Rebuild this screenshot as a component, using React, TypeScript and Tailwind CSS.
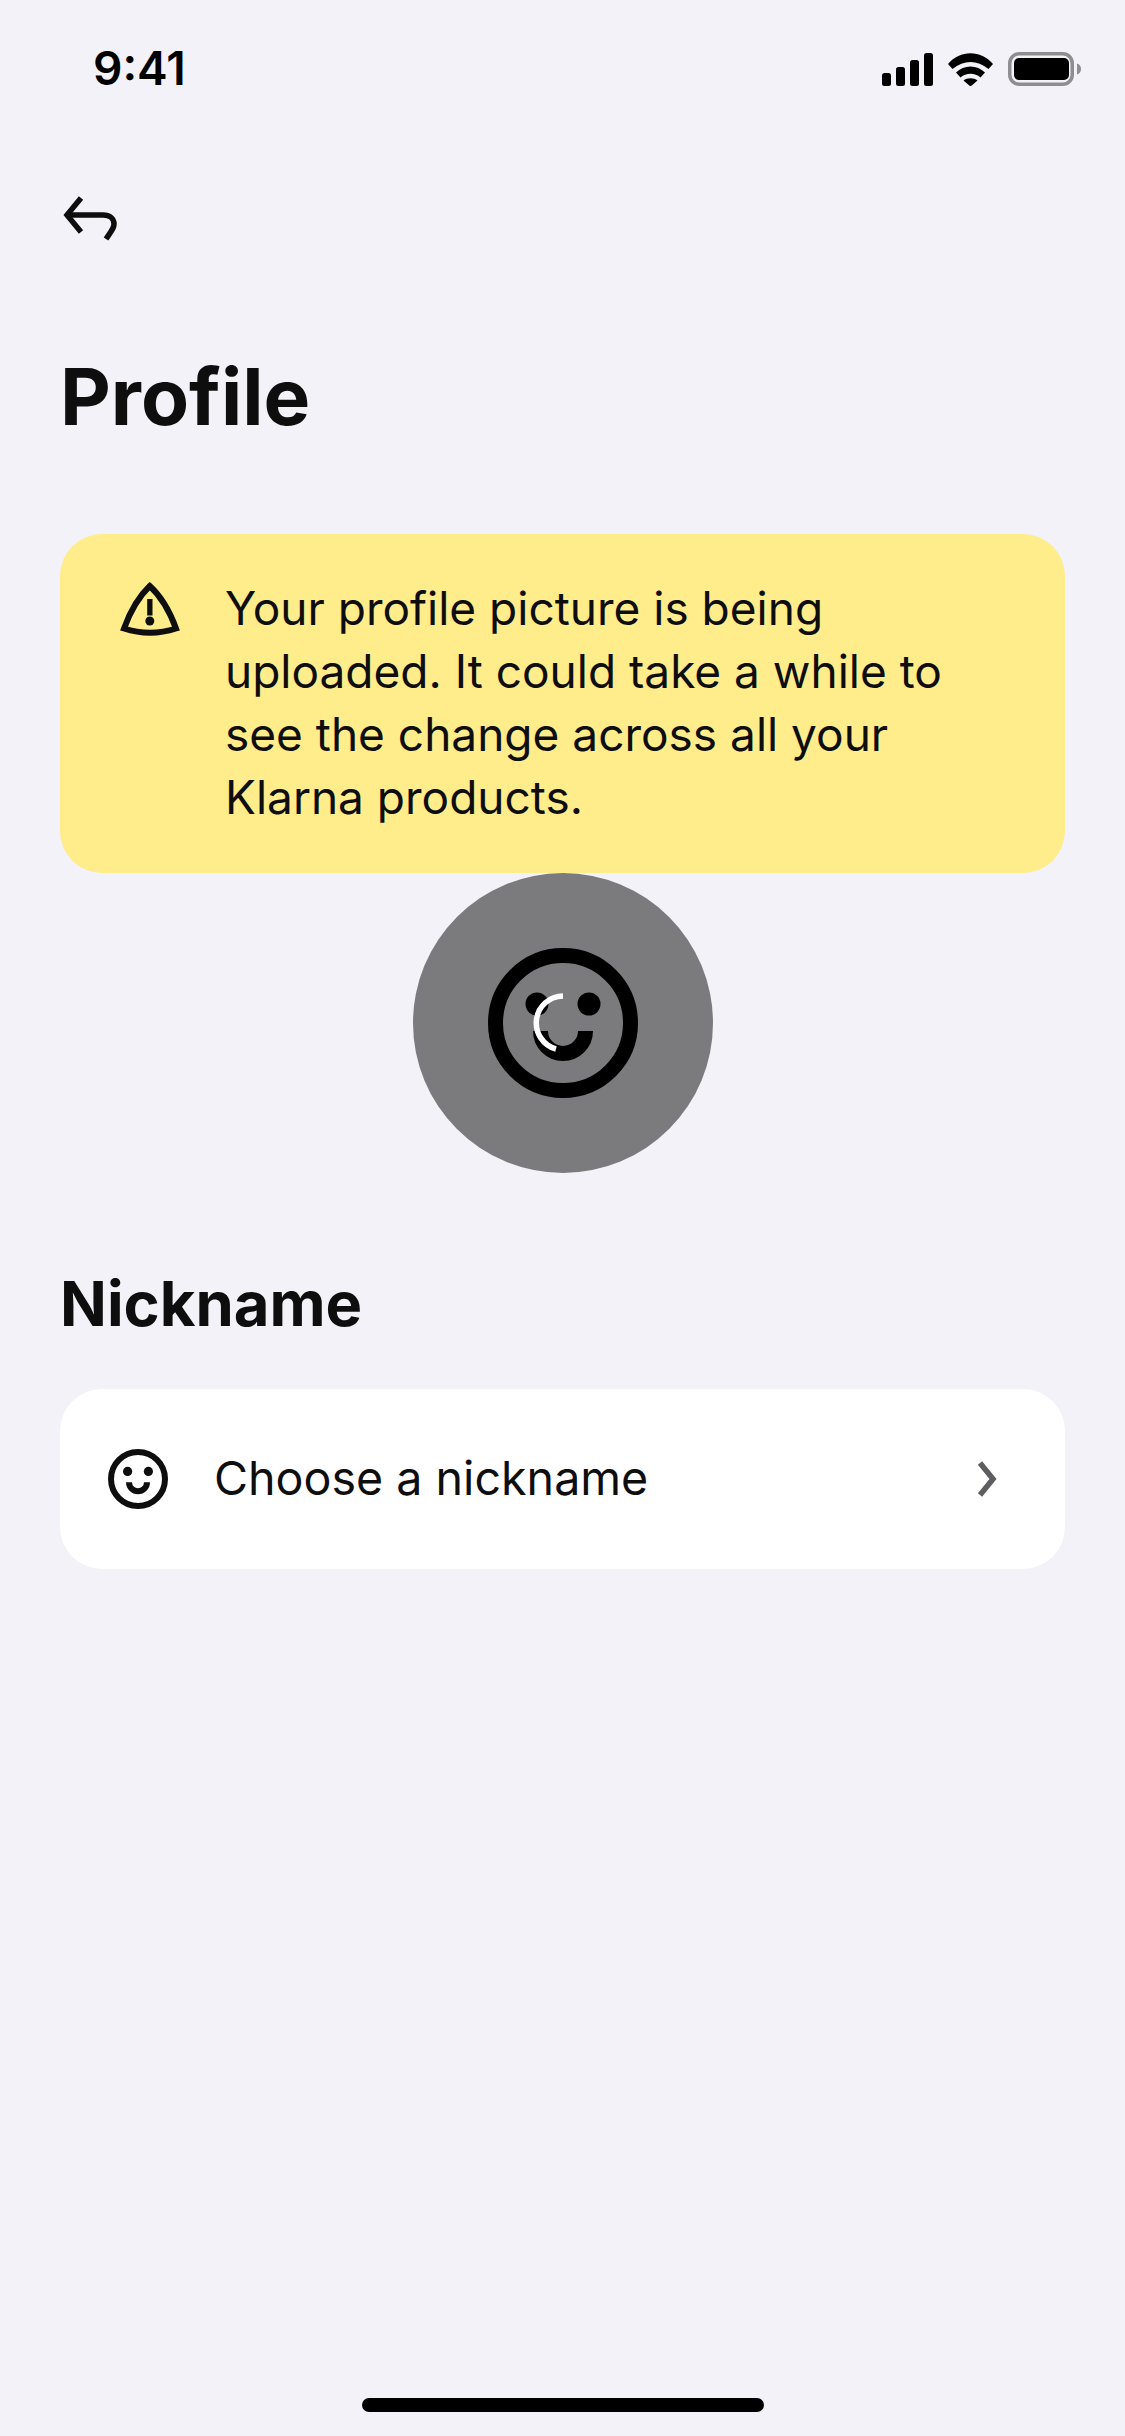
const FONT = "font-['Inter','Liberation_Sans',sans-serif]";

function Face({ spinner, color, className }: { spinner?: boolean; color: string; className: string }) {
  return (
    <svg viewBox="0 0 150 150" className={className} fill="none">
      <circle cx="75" cy="75" r="67.5" stroke={color} strokeWidth="15" />
      <circle cx="49" cy="56" r="11.5" fill={color} />
      <circle cx="101" cy="56" r="11.5" fill={color} />
      <path d="M52.5 83a22.5 22.5 0 0 0 45 0" stroke={color} strokeWidth="15" />
      {spinner && <path d="M75 48A27 27 0 0 0 68 101" stroke="#fff" strokeWidth="5.5" />}
    </svg>
  );
}

function StatusBar() {
  return (
    <div className="flex h-[86px] items-end justify-between pl-[93px] pr-[44px]">
      <span className="text-[46px] font-semibold leading-[36px] text-black">9:41</span>
      <div className="flex items-center gap-[15px]">
        <svg width="51" height="33" viewBox="0 0 51 33" fill="#000">
          <rect x="0" y="20" width="9" height="13" rx="2.5" />
          <rect x="14" y="14" width="9" height="19" rx="2.5" />
          <rect x="28" y="7" width="9" height="26" rx="2.5" />
          <rect x="42" y="0" width="9" height="33" rx="2.5" />
        </svg>
        <svg width="45" height="33" viewBox="0 0 45 33" fill="#000">
          <path d="M0 11C12-3.500 33-3.500 45 11L40.500 16C29 6.500 16 6.500 4.500 16Z" />
          <path d="M8 19.500C16 11.500 29 11.500 37 19.500L32.500 24.500C27 19.500 18 19.500 12.500 24.500Z" />
          <path d="M15.500 27.500C19 24.500 26 24.500 29.500 27.500L22.500 33.500Z" />
        </svg>
        <svg width="73" height="34" viewBox="0 0 73 34">
          <rect x="1.75" y="1.75" width="62.5" height="30.5" rx="9.5" fill="none" stroke="#8e8e90" strokeWidth="3.5" />
          <rect x="6" y="6" width="55" height="22" rx="5" fill="#000" />
          <path d="M69 11.500c2.500.6 4 2.800 4 5.500s-1.500 4.900-4 5.500z" fill="#8e8e90" />
        </svg>
      </div>
    </div>
  );
}

export default function App() {
  return (
    <div className={`${FONT} flex h-[2436px] w-full flex-col bg-[#f2f2f8] text-[#0e0e0f]`}>
      <StatusBar />
      <div className="flex flex-1 flex-col px-[60px]">
        <svg width="60" height="54" viewBox="0 0 60 54" fill="none" className="mt-[106px]" stroke="#0e0e0f" strokeWidth="5.5">
          <path d="M21 6L7 23L21 40" />
          <path d="M7 23H43C50 23 54 27 54 32C54 36 52 38 46 47" />
        </svg>
        <h1 className="mt-[101px] text-[78.5px] font-bold leading-[100px]">Profile</h1>
        <div className="mt-[87px] flex h-[339px] items-start rounded-[42px] bg-[#ffec8b] pl-[60px] pr-[60px] pt-[43px]">
          <svg width="60" height="60" viewBox="0 0 60 60" fill="none" className="mt-[4px] shrink-0 overflow-visible">
            <path d="M29.800 5Q46 20 56 47.500Q30 56 4 47.500Q14 20 29.800 5Z" stroke="#0e0e0f" strokeWidth="6" />
            <rect x="27.200" y="18" width="5.300" height="16.500" fill="#0e0e0f" />
            <circle cx="29.800" cy="40" r="4.500" fill="#0e0e0f" />
          </svg>
          <p className="ml-[45px] text-[46px] font-normal leading-[63px]">
            Your profile picture is being uploaded. It could take a while to see the change across all your Klarna products.
          </p>
        </div>
        <div className="flex h-[300px] w-[300px] items-center justify-center self-center rounded-full bg-[#7b7b7d]">
          <Face spinner color="#000" className="h-[150px] w-[150px]" />
        </div>
        <h2 className="mt-[96px] text-[61.5px] font-bold leading-[70px]">Nickname</h2>
        <div className="mt-[50px] flex h-[180px] items-center rounded-[42px] bg-white pl-[48px] pr-[68px]">
          <Face color="#0e0e0f" className="h-[60px] w-[60px] shrink-0" />
          <span className="mb-[2px] ml-[46px] flex-1 text-[46.6px] leading-[60px]">Choose a nickname</span>
          <svg width="20" height="36" viewBox="0 0 20 36" fill="none" stroke="#5e5e60" strokeWidth="5.500">
            <path d="M3 2L16 18L3 34" />
          </svg>
        </div>
      </div>
      <div className="mb-[24px] h-[14px] w-[402px] self-center rounded-full bg-black" />
    </div>
  );
}
